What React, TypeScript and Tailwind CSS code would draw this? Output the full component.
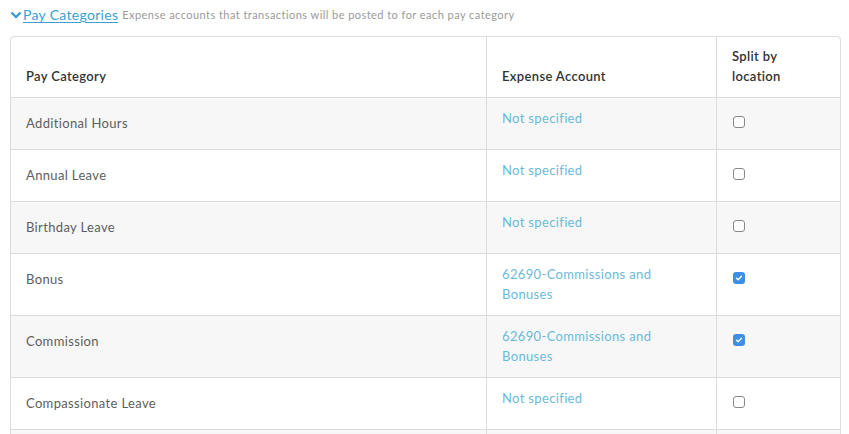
import React from "react";

type Row = { name: string; account: string[]; split: boolean };

const rows: Row[] = [
  { name: "Additional Hours", account: ["Not specified"], split: false },
  { name: "Annual Leave", account: ["Not specified"], split: false },
  { name: "Birthday Leave", account: ["Not specified"], split: false },
  { name: "Bonus", account: ["62690-Commissions and", "Bonuses"], split: true },
  { name: "Commission", account: ["62690-Commissions and", "Bonuses"], split: true },
  { name: "Compassionate Leave", account: ["Not specified"], split: false },
];

function Checkbox({ checked }: { checked: boolean }) {
  if (checked) {
    return (
      <div className="w-[12px] h-[12px] rounded-[3px] bg-[#3d8fe6] flex items-center justify-center">
        <svg width="8" height="8" viewBox="0 0 8 8">
          <path d="M1.5 4.2 L3.2 5.8 L6.5 2.2" stroke="white" strokeWidth="1.4" fill="none" strokeLinecap="round" strokeLinejoin="round" />
        </svg>
      </div>
    );
  }
  return <div className="w-[12px] h-[12px] rounded-[3px] border border-[#8a8a8a] bg-white" />;
}

export default function App() {
  return (
    <div className="w-[849px] h-[434px] overflow-hidden bg-white" style={{ fontFamily: "Lato, 'Open Sans', sans-serif" }}>
      <div className="flex items-start pl-[10px] pt-[6px] h-[30px]">
        <a className="flex items-center text-[14px] leading-[18px] tracking-[0.3px] text-[#3b9fd0] underline underline-offset-2">
          <svg width="12" height="10" viewBox="0 0 12 10" className="mr-[1px]">
            <path d="M1.5 2.5 L6 7 L10.5 2.5" stroke="#3b9fd0" strokeWidth="2.4" fill="none" />
          </svg>
          Pay Categories
        </a>
        <span className="ml-[4px] text-[11px] leading-[18px] tracking-[0.45px] text-[#9a9a9a]">
          Expense accounts that transactions will be posted to for each pay category
        </span>
      </div>
      <div className="ml-[10px] mt-[6px] w-[831px] border border-[#dcdcdc] rounded-[4px] text-[13px] tracking-[0.35px]">
        <div className="grid grid-cols-[475px_230px_124px] h-[60px]">
          <div className="flex items-end pl-[15px] pb-[11px] leading-[20px] font-semibold text-[#333]">Pay Category</div>
          <div className="flex items-end pl-[15px] pb-[11px] leading-[20px] font-semibold text-[#333] border-l border-[#dcdcdc]">Expense Account</div>
          <div className="flex items-end pl-[15px] pb-[11px] leading-[20px] font-semibold text-[#333] border-l border-[#dcdcdc]">
            Split by
            <br />
            location
          </div>
        </div>
        {rows.map((r, i) => (
          <div
            key={r.name}
            className={`grid grid-cols-[475px_230px_124px] border-t border-[#dcdcdc] ${i % 2 === 0 ? "bg-[#f7f7f7]" : "bg-white"}`}
          >
            <div className="pl-[15px] pt-[15px] pb-[16px] leading-[20px] text-[#5e5e5e]">{r.name}</div>
            <div className="pl-[15px] pt-[10px] pb-[11px] leading-[20px] text-[#6bbad9] border-l border-[#dcdcdc]">
              {r.account.map((l) => (
                <div key={l}>{l}</div>
              ))}
            </div>
            <div className="pl-[16px] pt-[18px] border-l border-[#dcdcdc]">
              <Checkbox checked={r.split} />
            </div>
          </div>
        ))}
        <div className="grid grid-cols-[475px_230px_124px] border-t border-[#dcdcdc] bg-[#f7f7f7] h-[51px]">
          <div />
          <div className="border-l border-[#dcdcdc]" />
          <div className="border-l border-[#dcdcdc]" />
        </div>
      </div>
    </div>
  );
}
